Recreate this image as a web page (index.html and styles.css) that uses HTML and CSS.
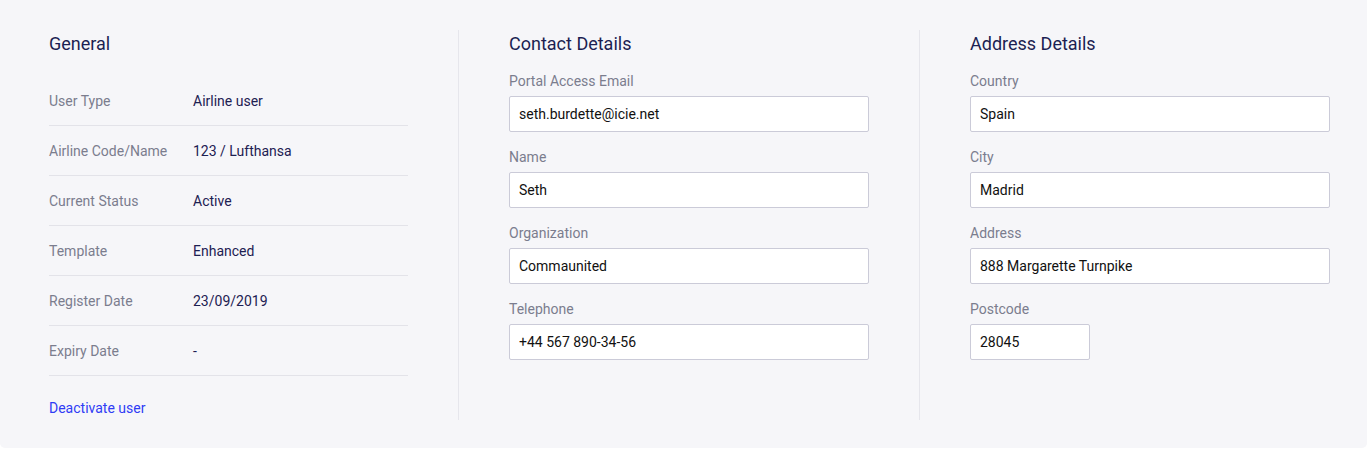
FILE: index.html
```html
<!DOCTYPE html>
<html lang="en">
<head>
<meta charset="utf-8">
<title>User details</title>
<link rel="stylesheet" href="styles.css">
</head>
<body>
<div class="panel">
  <section class="col col-general">
    <h2 class="title">General</h2>
    <dl class="info">
      <div class="row"><dt>User Type</dt><dd>Airline user</dd></div>
      <div class="row"><dt>Airline Code/Name</dt><dd>123 / Lufthansa</dd></div>
      <div class="row"><dt>Current Status</dt><dd>Active</dd></div>
      <div class="row"><dt>Template</dt><dd>Enhanced</dd></div>
      <div class="row"><dt>Register Date</dt><dd>23/09/2019</dd></div>
      <div class="row"><dt>Expiry Date</dt><dd>-</dd></div>
    </dl>
    <a class="link" href="#">Deactivate user</a>
  </section>
  <div class="divider"></div>
  <section class="col">
    <h2 class="title">Contact Details</h2>
    <div class="fields">
      <label class="field"><span class="label">Portal Access Email</span><input class="input" type="text" value="seth.burdette@icie.net"></label>
      <label class="field"><span class="label">Name</span><input class="input" type="text" value="Seth"></label>
      <label class="field"><span class="label">Organization</span><input class="input" type="text" value="Commaunited"></label>
      <label class="field"><span class="label">Telephone</span><input class="input" type="text" value="+44 567 890-34-56"></label>
    </div>
  </section>
  <div class="divider"></div>
  <section class="col">
    <h2 class="title">Address Details</h2>
    <div class="fields">
      <label class="field"><span class="label">Country</span><input class="input" type="text" value="Spain"></label>
      <label class="field"><span class="label">City</span><input class="input" type="text" value="Madrid"></label>
      <label class="field"><span class="label">Address</span><input class="input" type="text" value="888 Margarette Turnpike"></label>
      <label class="field"><span class="label">Postcode</span><input class="input input-short" type="text" value="28045"></label>
    </div>
  </section>
</div>
</body>
</html>
```
FILE: styles.css
```css
* { box-sizing: border-box; }
html, body { margin: 0; padding: 0; background: #ffffff; }
body {
  font-family: Roboto, "Liberation Sans", Arial, sans-serif;
  font-size: 14px;
  color: #1d2052;
}
.panel {
  width: 1367px;
  height: 448px;
  background: #f6f6f9;
  border-radius: 0 0 5px 5px;
  padding: 30px 0 28px 49px;
  display: flex;
  align-items: stretch;
}
.col {
  width: 360px;
  display: flex;
  flex-direction: column;
}
.col-general { width: 359px; }
.divider {
  width: 1px;
  background: #e6e6ec;
  margin: 0 50px;
}
.title {
  margin: 0;
  font-size: 18px;
  line-height: 28px;
  font-weight: 400;
  color: #1c1f52;
}
.info {
  margin: 18px 0 0;
}
.row {
  display: flex;
  align-items: center;
  height: 50px;
  border-bottom: 1px solid #e3e3e9;
}
.row dt {
  width: 144px;
  color: #7b7d8e;
  line-height: 20px;
}
.row dd {
  margin: 0;
  color: #1d2052;
  line-height: 20px;
}
.link {
  margin-top: 22px;
  line-height: 20px;
  color: #2f3cf5;
  text-decoration: none;
}
.fields {
  margin-top: 13px;
  display: flex;
  flex-direction: column;
  gap: 15px;
}
.field {
  display: flex;
  flex-direction: column;
  gap: 5px;
}
.label {
  line-height: 20px;
  color: #7b7d8e;
}
.input {
  width: 360px;
  height: 36px;
  border: 1px solid #cbcbd8;
  border-radius: 2px;
  background: #ffffff;
  padding: 0 9px;
  font-family: Roboto, "Liberation Sans", Arial, sans-serif;
  font-size: 14px;
  color: #111111;
  outline: none;
}
.input-short { width: 120px; }
```
